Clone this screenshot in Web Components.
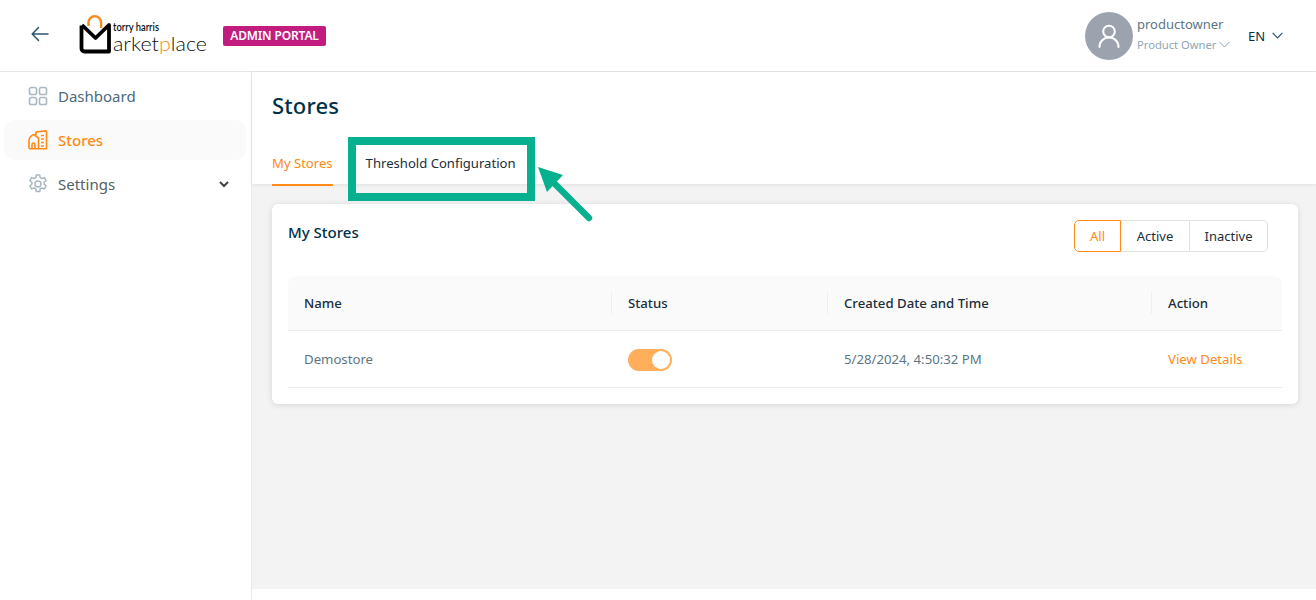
<!DOCTYPE html>
<html lang="en"><head><meta charset="utf-8"><title>Stores</title>
<style>
html,body{margin:0;height:600px;overflow:hidden}
body{font-family:"Noto Sans","Open Sans",sans-serif;background:#fff}
</style></head><body>
<app-shell>
  <app-header slot="header"></app-header>
  <app-sidebar slot="sidebar">
    <nav-item icon="dash" label="Dashboard"></nav-item>
    <nav-item icon="store" label="Stores" active></nav-item>
    <nav-item icon="gear" label="Settings" caret></nav-item>
  </app-sidebar>
  <page-head slot="main"></page-head>
  <stores-card slot="main"></stores-card>
</app-shell>
<script>
function def(name,html){
  customElements.define(name,class extends HTMLElement{
    connectedCallback(){
      if(this.shadowRoot)return;
      const r=this.attachShadow({mode:'open'});
      r.innerHTML=typeof html==='function'?html(this):html;
    }
  });
}
def('app-shell',`<style>
:host{display:grid;grid-template-columns:252px 1fr;grid-template-rows:72px 528px;width:1316px;height:600px;position:relative}
.h{grid-column:1/3}
.s{border-right:1px solid #ebebeb;background:#fff}
.m{background:#f3f3f3;display:flex;flex-direction:column;position:relative}
.foot{margin-top:auto;height:11px;background:#fff;flex:none;border-top-left-radius:2px}
.mark{position:absolute;left:96px;top:65px;width:187px;height:64px;box-sizing:border-box;border:8px solid #07b08f}
.arrow{position:absolute;left:280px;top:90px}
</style>
<div class="h"><slot name="header"></slot></div>
<div class="s"><slot name="sidebar"></slot></div>
<div class="m"><slot name="main"></slot><div class="foot"></div>
<div class="mark"></div>
<svg class="arrow" width="70" height="70" viewBox="0 0 70 70"><path d="M6 5L31 13 15 30Z" fill="#07b08f"/><path d="M20 19L57 56" stroke="#07b08f" stroke-width="6.500" stroke-linecap="round"/></svg>
</div>`);
def('app-header',`<style>
:host{display:flex;align-items:center;height:72px;box-sizing:border-box;border-bottom:1px solid #e6e6e6;background:#fff;color:#003047}
.back{margin-left:30px;margin-bottom:4px;width:20px;height:20px;flex:none}
.logo{margin-left:29px;flex:none;display:block}
.badge{margin-left:16px;background:#c21c7f;color:#fff;font-weight:600;font-size:12px;line-height:20px;height:20px;padding:0 7px;border-radius:2px;white-space:nowrap;letter-spacing:-.15px;width:89px;text-align:center}
.sp{flex:1}
.av{width:48px;height:48px;border-radius:50%;background:#9ca3af;display:flex;align-items:center;justify-content:center;flex:none}
.who{margin-left:4px;width:111px;display:flex;flex-direction:column;gap:3px;margin-top:-4px}
.n{font-size:13px;line-height:18px;color:#5d7686}
.r{font-size:11.200px;line-height:17px;color:#8fa5b3;display:flex;align-items:center;gap:3px;white-space:nowrap}
.lang{font-size:13px;color:#003047;width:68px;display:flex;align-items:center;gap:8px;flex:none}
</style>
<svg class="back" viewBox="0 0 20 20" fill="none" stroke="#2c566e" stroke-width="1.500" stroke-linecap="round" stroke-linejoin="round"><path d="M2.500 10H18M8.500 3.500L2.200 10l6.300 6.500"/></svg>
<svg class="logo" width="128" height="44" viewBox="0 0 128 44">
<path d="M9.500 12V8.500a6.300 6.300 0 0 1 12.600 0V14" fill="none" stroke="#f58a1f" stroke-width="2.400"/>
<path d="M3 11L16.500 24 30 11V37.500H5.500a3 3 0 0 1-3-3V11.500" fill="none" stroke="#000" stroke-width="3.800" stroke-linejoin="round"/>
<text x="34" y="16.500" font-family="Lato,sans-serif" font-size="11" font-weight="600" fill="#111" textLength="46" lengthAdjust="spacingAndGlyphs">torry harris</text>
<text x="34" y="37" font-family="Lato,sans-serif" font-size="20" font-weight="300" fill="#111" textLength="94" lengthAdjust="spacingAndGlyphs">arket<tspan fill="#f58a1f">p</tspan>lace</text>
</svg>
<div class="badge">ADMIN PORTAL</div>
<div class="sp"></div>
<div class="av"><svg width="26" height="26" viewBox="0 0 26 26" fill="none" stroke="#fff" stroke-width="2" stroke-linecap="round"><circle cx="13" cy="8.500" r="5.800"/><path d="M3.500 24c0-5.500 4-9.500 9.500-9.500s9.500 4 9.500 9.500"/></svg></div>
<div class="who"><div class="n">productowner</div><div class="r">Product Owner<svg width="11" height="7" viewBox="0 0 11 7" fill="none" stroke="#8fa5b3" stroke-width="1"><path d="M.5 .8L5.500 6l5-5.200"/></svg></div></div>
<div class="lang">EN<svg style="margin-left:-1px" width="11" height="7" viewBox="0 0 11 7" fill="none" stroke="#2c566e" stroke-width="1.200"><path d="M.6 .8L5.500 6l4.900-5.200"/></svg></div>`);
def('app-sidebar',`<style>:host{display:flex;flex-direction:column;gap:4px;padding:4px 5px 0 4px}</style><slot></slot>`);
const icons={
dash:`<g fill="none" stroke="#a9b8c3" stroke-width="1.600"><rect x="1.500" y="1.500" width="7" height="7" rx="1.800"/><rect x="11.500" y="1.500" width="7" height="7" rx="1.800"/><rect x="1.500" y="11.500" width="7" height="7" rx="1.800"/><rect x="11.500" y="11.500" width="7" height="7" rx="1.800"/></g>`,
store:`<g fill="none" stroke="#ff8a15" stroke-width="1.600" stroke-linejoin="round"><path d="M8 5V2L17.500 .9a1 1 0 0 1 1 1V18.800H2a1 1 0 0 1-1-1V10C1 7.500 4 5 6 4.500L10.500 8V18.800"/><path d="M13 5.500h3M13 9h3M13 12.500h3M13 16h3M4 18.800V14.500a1.500 1.500 0 0 1 3 0V18.800"/></g>`,
gear:`<g fill="none" stroke="#a9b8c3" stroke-width="1.500" stroke-linejoin="round"><circle cx="10" cy="10" r="3"/><path d="M8.300 1h3.400l.5 2.600 1.700.9 2.500-.9 1.700 3-2 1.700v1.900l2 1.700-1.700 3-2.500-.9-1.700.9-.5 2.600H8.300l-.5-2.600-1.700-.9-2.500.9-1.700-3 2-1.700V8.300l-2-1.700 1.700-3 2.500.9 1.700-.9z"/></g>`};
def('nav-item',h=>{const a=h.hasAttribute('active'),c=h.getAttribute('label')==='Dashboard'?'#4b6a7e':a?'#ff8a15':'#555f66';
return `<style>
:host{display:flex;align-items:center;height:40px;border-radius:10px;padding-left:24px;padding-right:17px;background:${a?'#fafafa':'transparent'};color:${c};font-size:15px;font-weight:${a?500:400}}
svg.i{width:20px;height:20px;margin-right:10px;flex:none}
.c{margin-left:auto}
</style><svg class="i" viewBox="0 0 20 20">${icons[h.getAttribute('icon')]}</svg><span>${h.getAttribute('label')}</span>${h.hasAttribute('caret')?'<svg class="c" width="10" height="7" viewBox="0 0 10 7" fill="none" stroke="#444" stroke-width="2"><path d="M1 1l4 4 4-4"/></svg>':''}`});
def('page-head',`<style>
:host{display:block;height:112px;background:#fff;box-shadow:0 1px 4px rgba(0,0,0,.08);position:relative}
h1{margin:0;padding:19px 0 0 20px;font-size:22px;line-height:28px;font-weight:500;color:#003047;letter-spacing:.15px}
.tabs{display:flex;padding-left:20px;margin-top:29px;gap:33px;font-size:13.100px;line-height:20px}
.tab{height:36px;box-sizing:border-box;padding-top:5px;color:#1c2e3a;white-space:nowrap}
.on{color:#ff8a15;border-bottom:2px solid #ff8a15;height:38px}
</style><h1>Stores</h1><div class="tabs"><div class="tab on">My Stores</div><div class="tab">Threshold Configuration</div></div>`);
def('seg-filter',`<style>
:host{display:flex;font-size:13px;height:32px;box-sizing:border-box;color:#1c2e3a;line-height:30px;text-align:center}
div{border:1px solid #e0e0e0;box-sizing:border-box}
.a{width:47px;color:#ff8a15;border-color:#ff8a15;border-radius:5px 0 0 5px}
.b{width:69px;border-left:0}
.c{width:78px;border-left:0;border-radius:0 5px 5px 0}
</style><div class="a">All</div><div class="b">Active</div><div class="c">Inactive</div>`);
def('toggle-sw',`<style>
:host{display:block;width:44px;height:22px;border-radius:11px;background:#ffae5c;position:relative;margin-top:2px}
i{position:absolute;right:2px;top:2px;width:18px;height:18px;border-radius:50%;background:#fff}
</style><i></i>`);
def('stores-card',`<style>
:host{display:block;margin:20px 18px 0 20px;height:200px;background:#fff;border-radius:6px;box-shadow:0 1px 6px rgba(0,0,0,.12);box-sizing:border-box;padding:16px 16px 0 16px}
.top{display:flex;justify-content:space-between;padding-right:14px;height:56px}
h2{margin:0;font-size:15px;line-height:24px;font-weight:500;color:#003047}
.g{display:grid;grid-template-columns:324px 216px 324px 130px;font-size:13.200px}
.th{height:55px;background:#fafafa;border-bottom:1px solid #ececec;display:flex;align-items:center;font-weight:500;color:#1c2e3a;padding-left:16px;position:relative;box-sizing:border-box}
.th:first-child{border-top-left-radius:8px}
.th:nth-child(4){border-top-right-radius:8px}
.th+.th::before{content:"";position:absolute;left:-1px;top:16px;height:22px;width:1px;background:#efefef}
.td{height:57px;border-bottom:1px solid #ececec;display:flex;align-items:center;padding-left:16px;color:#5d7686;box-sizing:border-box}
.o{color:#ff8a15}
</style><div class="top"><h2>My Stores</h2><seg-filter></seg-filter></div>
<div class="g"><div class="th">Name</div><div class="th">Status</div><div class="th">Created Date and Time</div><div class="th">Action</div>
<div class="td">Demostore</div><div class="td"><toggle-sw></toggle-sw></div><div class="td">5/28/2024, 4:50:32 PM</div><div class="td o">View Details</div></div>`);
</script>
</body></html>
